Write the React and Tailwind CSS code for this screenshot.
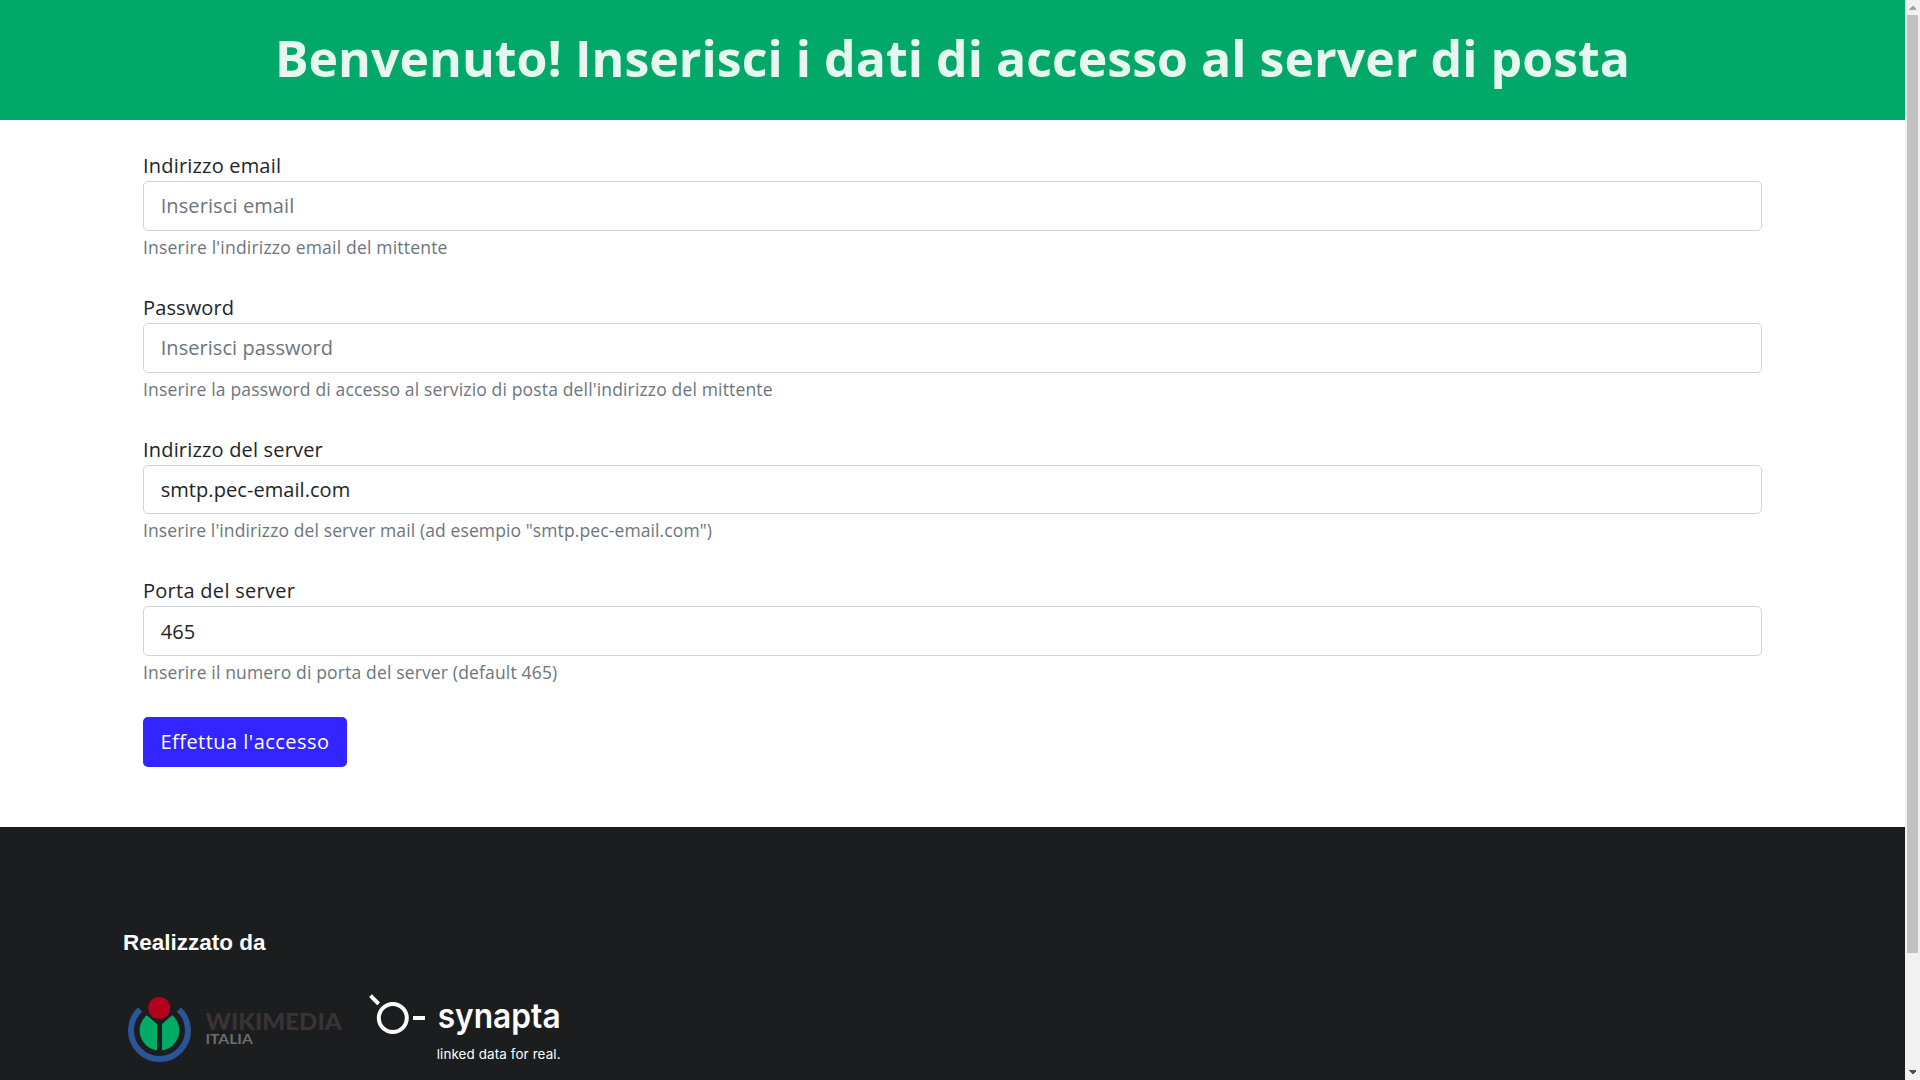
const fields = [
  {
    id: "email",
    type: "email",
    label: "Indirizzo email",
    labelClass: "tracking-[0.19px]",
    placeholder: "Inserisci email",
    inputClass: "tracking-[0.1px]",
    hint: "Inserire l'indirizzo email del mittente",
    hintClass: "tracking-[0.2px]",
  },
  {
    id: "password",
    type: "password",
    label: "Password",
    labelClass: "tracking-[0.12px]",
    placeholder: "Inserisci password",
    inputClass: "tracking-[0.05px]",
    hint: "Inserire la password di accesso al servizio di posta dell'indirizzo del mittente",
    hintClass: "tracking-[0.155px]",
  },
  {
    id: "server",
    type: "text",
    label: "Indirizzo del server",
    labelClass: "tracking-[0.18px]",
    value: "smtp.pec-email.com",
    inputClass: "tracking-[0.06px]",
    hint: "Inserire l'indirizzo del server mail (ad esempio \"smtp.pec-email.com\")",
    hintClass: "tracking-[0.11px]",
  },
  {
    id: "port",
    type: "text",
    label: "Porta del server",
    labelClass: "tracking-[0.28px]",
    value: "465",
    inputClass: "tracking-[0.15px]",
    hint: "Inserire il numero di porta del server (default 465)",
    hintClass: "tracking-[0.16px]",
  },
];

function Field({ id, type, label, labelClass, placeholder, value, inputClass, hint, hintClass }) {
  return (
    <div className="flex h-[141.75px] flex-col">
      <label htmlFor={id} className={`h-[30px] text-xl leading-[30px] ${labelClass}`}>
        {label}
      </label>
      <input
        id={id}
        type={type}
        placeholder={placeholder}
        defaultValue={value}
        className={`h-[49.75px] w-full shrink-0 rounded-[5px] border border-[#ced4da] bg-white px-[16.7px] text-xl text-[#212529] placeholder:text-[#6c757d] ${inputClass}`}
      />
      <small className={`mt-1 text-[17.5px] leading-6 text-[#6c757d] ${hintClass}`}>{hint}</small>
    </div>
  );
}

function WikimediaLogo() {
  return (
    <svg width="216" height="66" viewBox="0 0 216 66" className="overflow-visible" aria-label="Wikimedia Italia">
      <path d="M12.1 12.5a28.5 28.5 0 1 0 38.8 0" fill="none" stroke="#2a5699" strokeWidth="6" />
      <path d="M18.7 18.2 29 27V53.3A20 20 0 0 1 18.7 18.2Z" fill="#00ab66" />
      <path d="M44.3 18.2 34 27V53.3A20 20 0 0 0 44.3 18.2Z" fill="#00ab66" />
      <circle cx="31.2" cy="11.1" r="11" fill="#b5001e" />
      <text x="77.6" y="33.4" textLength="136" lengthAdjust="spacingAndGlyphs" fontSize="22.4" className="fill-[#3a3335] font-['Lato'] font-black">
        WIKIMEDIA
      </text>
      <text x="77.4" y="47" textLength="47.4" lengthAdjust="spacingAndGlyphs" fontSize="12.4" className="fill-[#6e6c6e] font-['Lato'] font-bold">
        ITALIA
      </text>
    </svg>
  );
}

function SynaptaLogo() {
  return (
    <svg width="200" height="80" viewBox="0 0 200 80" className="overflow-visible" aria-label="Synapta">
      <g fill="none" stroke="#fff" strokeWidth="4">
        <circle cx="23.8" cy="25" r="14" />
        <path d="m1.5 2.7 8.1 8.1M44 25.1h12" />
      </g>
      <text x="68.7" y="35" textLength="122.9" lengthAdjust="spacingAndGlyphs" fontSize="34.5" className="fill-white font-['Inter'] font-semibold">
        synapta
      </text>
      <text x="67.7" y="65.6" textLength="123.8" lengthAdjust="spacing" fontSize="13.4" className="fill-white font-['Inter'] font-normal">
        linked data for real.
      </text>
    </svg>
  );
}

function Scrollbar() {
  return (
    <div className="flex h-full w-[15px] shrink-0 flex-col items-center bg-[#f1f1f1]">
      <svg width="15" height="15" className="shrink-0" shapeRendering="crispEdges">
        <path d="M4 10V9l3.5-3.5L11 9v1Z" fill="#a3a3a3" />
      </svg>
      <div className="h-[938px] w-[11px] shrink-0 bg-[#c1c1c1]" />
      <svg width="15" height="15" className="mt-auto shrink-0" shapeRendering="crispEdges">
        <path d="M4 5v1l3.5 3.5L11 6V5Z" fill="#505050" />
      </svg>
    </div>
  );
}

export default function App() {
  return (
    <div className="flex h-[1080px] w-[1920px] overflow-hidden bg-white font-['Open_Sans',sans-serif] text-[#212529]">
      <div className="flex min-w-0 flex-1 flex-col">
        <header className="h-[120px] shrink-0 bg-[#02a867] text-center">
          <h1 className="pt-7 text-[50px] leading-[60px] font-bold tracking-[0.03px] whitespace-nowrap text-[#e6f6f0]">
            Benvenuto! Inserisci i dati di accesso al server di posta
          </h1>
        </header>
        <main className="h-[707px] shrink-0 px-[143px] pt-[31px]">
          <form onSubmit={(e) => e.preventDefault()}>
            {fields.map((field) => (
              <Field key={field.id} {...field} />
            ))}
            <button
              type="submit"
              className="-mt-px h-[50px] w-[204px] rounded-[5px] bg-[#3325ff] text-xl tracking-[0.47px] text-white"
            >
              Effettua l'accesso
            </button>
          </form>
        </main>
        <footer className="flex-1 bg-[#1c1d1f] pt-[100px] pl-[123px] font-['Liberation_Sans',sans-serif]">
          <h2 className="text-[22.5px] leading-8 font-bold text-white">Realizzato da</h2>
          <div className="mt-[34px] flex items-start">
            <div className="pt-[4px] pl-[5px]">
              <WikimediaLogo />
            </div>
            <div className="pl-[25px]">
              <SynaptaLogo />
            </div>
          </div>
        </footer>
      </div>
      <Scrollbar />
    </div>
  );
}
